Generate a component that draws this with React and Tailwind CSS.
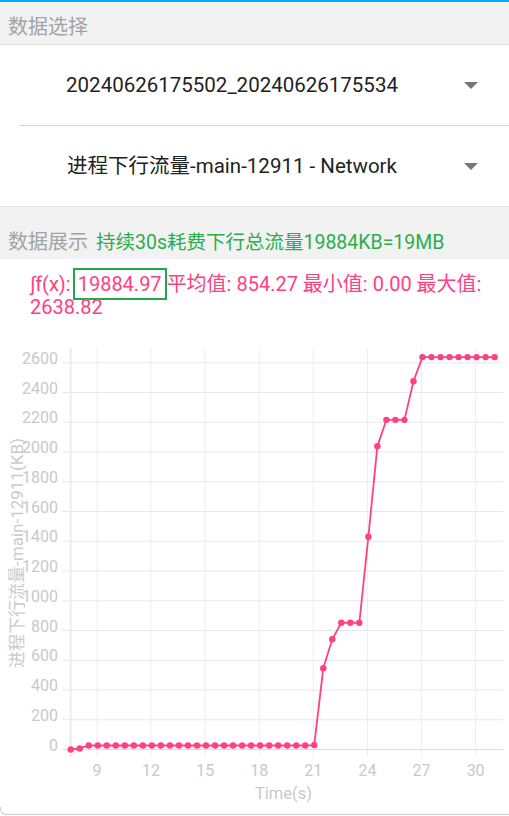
import React from 'react';

const FONT = { fontFamily: 'Roboto, "Noto Sans CJK SC", sans-serif' };

// chart geometry, in page pixels (the svg's viewBox starts at y=320)
const Y0 = 750.5;
const PER = 29.75 / 200;
const yOf = (v) => Y0 - v * PER;
const xOfT = (t) => 97 + (t - 9) * 18.03;

const values = [
  0, 7,
  ...Array(25).fill(27),
  30, 546, 741, 852, 852, 852, 1430, 2039, 2216, 2216, 2216, 2476,
  ...Array(9).fill(2638),
];

const points = values.map((v, i) => [70.7 + 9.02 * i, yOf(v)]);

const Arrow = () => (
  <svg width="14" height="7" viewBox="0 0 14 7" className="shrink-0">
    <path d="M0 0 L14 0 L7 7 Z" fill="#777777" />
  </svg>
);

const Chart = () => {
  const yTicks = Array.from({ length: 14 }, (_, i) => i * 200);
  const xTicks = [9, 12, 15, 18, 21, 24, 27, 30];
  return (
    <svg width="509" height="496" viewBox="0 320 509 496" className="block">
      {/* vertical grid */}
      {xTicks.map((t) => (
        <line key={t} x1={xOfT(t)} y1="349" x2={xOfT(t)} y2="758" stroke="#efefef" strokeWidth="1" />
      ))}
      <line x1="70.6" y1="349" x2="70.6" y2="758" stroke="#ebebeb" strokeWidth="2" />
      {/* horizontal grid */}
      {yTicks.map((v) => (
        <line
          key={v}
          x1="62"
          y1={yOf(v)}
          x2="503"
          y2={yOf(v)}
          stroke={v === 0 ? '#dddddd' : '#e8e8e8'}
          strokeWidth="1"
        />
      ))}
      {/* y labels */}
      {yTicks.map((v) => (
        <text key={v} x="58" y={yOf(v) + 1} textAnchor="end" fontSize="16" fill="#c9c9c9" style={FONT}>
          {v}
        </text>
      ))}
      {/* x labels */}
      {xTicks.map((t) => (
        <text key={t} x={xOfT(t)} y="777" textAnchor="middle" fontSize="16" fill="#c9c9c9" style={FONT}>
          {t}
        </text>
      ))}
      <text x="283.5" y="800" textAnchor="middle" fontSize="16.5" fill="#c9c9c9" style={FONT}>
        Time(s)
      </text>
      <text
        x="17"
        y="554"
        transform="rotate(-90 17 554)"
        textAnchor="middle"
        dominantBaseline="central"
        fontSize="17"
        fill="#cbcbcb"
        style={FONT}
      >
        进程下行流量-main-12911(KB)
      </text>
      {/* series */}
      <polyline
        points={points.map((p) => p.join(',')).join(' ')}
        fill="none"
        stroke="#ff4081"
        strokeWidth="1.8"
      />
      {points.map(([x, y], i) => (
        <circle key={i} cx={x} cy={y} r="3.2" fill="#ff4081" />
      ))}
    </svg>
  );
};

export default function App() {
  return (
    <div className="w-[509px] h-[816px] overflow-hidden bg-white flex flex-col" style={FONT}>
      <div className="h-[2px] bg-[#03a9f4]" />

      {/* 数据选择 */}
      <div className="h-[42px] bg-[#f2f2f2] pt-[13px] pl-[8px] text-[20px] leading-[24px] text-[#a3a3a3]">
        数据选择
      </div>
      <div className="h-px bg-[#e2e2e2]" />

      <div className="h-[80px] flex items-center">
        <div className="w-[464px] text-center text-[20.5px] text-[#222222]">20240626175502_20240626175534</div>
        <Arrow />
      </div>
      <div className="h-px ml-[19px] bg-[#d6d6d6]" />
      <div className="h-[80px] flex items-center">
        <div className="w-[464px] text-center text-[20.5px] text-[#222222]">进程下行流量-main-12911 - Network</div>
        <Arrow />
      </div>
      <div className="h-px bg-[#e2e2e2]" />

      {/* 数据展示 */}
      <div className="h-[52px] bg-[#f2f2f2] pt-[23px] pl-[8px] flex items-baseline gap-[8px] leading-[24px]">
        <span className="text-[20px] text-[#a3a3a3]">数据展示</span>
        <span className="text-[19.5px] text-[#2aae4c]">持续30s耗费下行总流量19884KB=19MB</span>
      </div>

      <div className="pt-[14px] pl-[30px] pr-[20px] text-[20px] leading-[23px] text-[#ff4081]">
        ∫f(x):<span className="ml-[2px] border-2 border-[#22a84a] px-[3px] py-[2px]">19884.97</span>平均值: 854.27 最小值: 0.00 最大值: 2638.82
      </div>

      <div className="relative flex-1">
        <div className="absolute left-0 top-0">
          <Chart />
        </div>
        <div className="absolute left-0 right-0 bottom-[1px] h-[8px] border-b border-l border-[#cfcfcf] rounded-bl-[6px]" />
      </div>
    </div>
  );
}
